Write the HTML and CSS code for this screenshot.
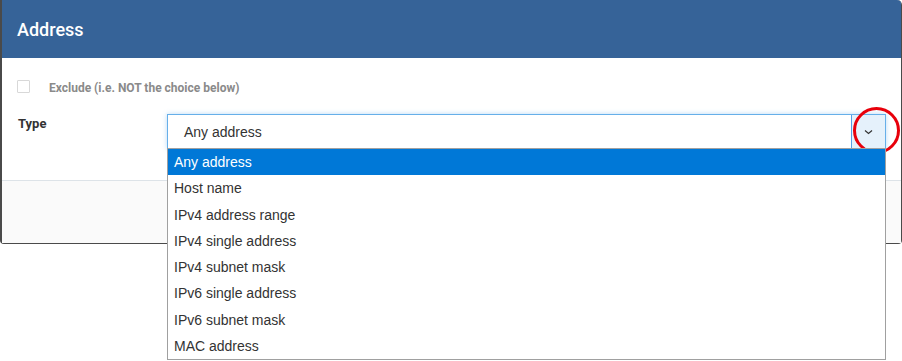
FILE: index.html
```html
<!DOCTYPE html>
<html lang="en">
<head>
    <meta charset="UTF-8">
    <title>Address</title>
    <link rel="stylesheet" href="styles.css">
</head>
<body>
    <div class="modal">
        <div class="modal-header">
            <h2>Address</h2>
        </div>
        <div class="modal-body">
            <label class="check-row">
                <span class="checkbox"></span>
                <span class="check-label">Exclude (i.e. NOT the choice below)</span>
            </label>
            <div class="field-row">
                <span class="field-label">Type</span>
                <div class="select-wrap">
                    <div class="select-box">
                        <span class="select-value">Any address</span>
                        <span class="select-arrow">
                            <svg width="9" height="6" viewBox="0 0 9 6"><path d="M1 1.5 L4.5 4.5 L8 1.5" fill="none" stroke="#333" stroke-width="1.2"/></svg>
                        </span>
                    </div>
                    <span class="highlight-ring"></span>
                    <ul class="options">
                        <li class="active">Any address</li>
                        <li>Host name</li>
                        <li>IPv4 address range</li>
                        <li>IPv4 single address</li>
                        <li>IPv4 subnet mask</li>
                        <li>IPv6 single address</li>
                        <li>IPv6 subnet mask</li>
                        <li>MAC address</li>
                    </ul>
                </div>
            </div>
        </div>
        <div class="modal-footer"></div>
    </div>
</body>
</html>
```

FILE: styles.css
```css
*,
*::before,
*::after{
    padding: 0;
    margin: 0;
    box-sizing: border-box;
}
html,
body{
    min-height: 361px;
}
body{
    background-color: #ffffff;
    font-family: Roboto, "Liberation Sans", sans-serif;
}
.modal{
    width: 902px;
    border: 1px solid #4a4a4a;
    border-left-width: 2px;
    border-top: none;
    border-radius: 0 5px 4px 4px;
    position: relative;
}
.modal-header{
    height: 58px;
    background-color: #366398;
    padding-left: 15px;
    display: flex;
    align-items: center;
    border-top-right-radius: 4px;
}
.modal-header h2{
    color: #ffffff;
    font-size: 18px;
    font-weight: 500;
}
.modal-body{
    height: 122px;
    background-color: #ffffff;
    padding: 20px 0 0 15px;
}
.check-row{
    display: flex;
    align-items: center;
}
.checkbox{
    width: 13px;
    height: 13px;
    border: 1px solid #d8d8d8;
    border-radius: 1px;
}
.check-label{
    margin-left: 19px;
    font-size: 12px;
    font-weight: bold;
    color: #8a8a8a;
    padding-top: 3px;
}
.field-row{
    display: flex;
    margin-top: 19px;
}
.field-label{
    width: 150px;
    font-size: 13px;
    font-weight: bold;
    color: #333333;
    padding: 2px 0 0 1px;
}
.select-wrap{
    position: relative;
    width: 719px;
}
.select-box{
    height: 35px;
    border: 1px solid #66afe9;
    box-shadow: 0 0 5px rgba(102,175,233,0.45);
    display: flex;
    align-items: center;
    justify-content: space-between;
    background-color: #ffffff;
}
.select-value{
    font-family: "Liberation Sans", sans-serif;
    font-size: 14px;
    color: #333333;
    padding-left: 16px;
}
.select-arrow{
    width: 34px;
    height: 33px;
    background-color: #e5f1fb;
    border-left: 1px solid #569de5;
    display: flex;
    align-items: center;
    justify-content: center;
}
.highlight-ring{
    position: absolute;
    right: -14px;
    top: -7px;
    width: 47px;
    height: 47px;
    border: 3px solid #e8000b;
    border-radius: 50%;
}
.options{
    position: absolute;
    top: 34px;
    left: 0;
    width: 719px;
    list-style: none;
    background-color: #ffffff;
    border: 1px solid #a0a0a0;
}
.options li{
    height: 26.3px;
    line-height: 26px;
    padding-left: 6px;
    font-family: "Liberation Sans", sans-serif;
    font-size: 14px;
    color: #333333;
}
.options li.active{
    background-color: #0078d7;
    color: #ffffff;
}
.modal-footer{
    height: 63px;
    background-color: #fafafa;
    border-top: 1px solid #dde3e8;
}
```
